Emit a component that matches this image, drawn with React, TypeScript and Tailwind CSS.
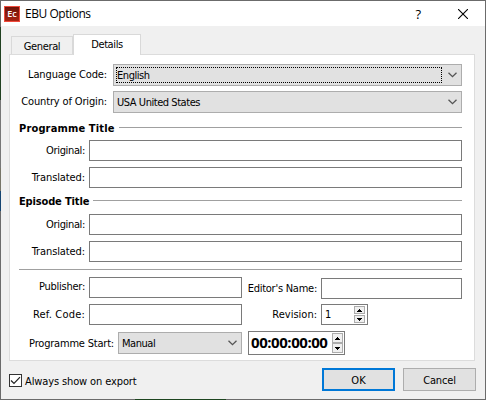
import type { ReactNode } from "react";

function Chevron() {
  return (
    <svg width="9" height="6" viewBox="0 0 9 6" fill="none" stroke="#555" strokeWidth="1.3" className="mr-[4px] shrink-0">
      <path d="M0.5 0.7 4.5 4.7 8.5 0.7" />
    </svg>
  );
}

function Label({ children, className }: { children: ReactNode; className: string }) {
  return <label className={`shrink-0 text-right whitespace-nowrap ${className}`}>{children}</label>;
}

function Combo({ value, className, focused = false }: { value: string; className: string; focused?: boolean }) {
  return (
    <div className={`flex h-[22px] shrink-0 items-center justify-between border border-[#adadad] bg-[#e1e1e1] ${className}`}>
      <span className={`ml-[2px] flex h-[16px] items-center whitespace-nowrap border border-dotted pt-[2px] tracking-[-0.45px] ${focused ? "w-[326px] border-black" : "border-transparent"}`}>
        {value}
      </span>
      <Chevron />
    </div>
  );
}

function Field({ className }: { className: string }) {
  return <div className={`h-[21px] shrink-0 border border-[#7a7a7a] bg-white ${className}`} />;
}

function Heading({ title, className }: { title: string; className: string }) {
  return (
    <div className="flex h-[14px] items-center">
      <span className={`shrink-0 whitespace-nowrap pt-[2px] font-bold ${className}`}>{title}</span>
      <span className="mb-px h-px flex-1 bg-[#a0a0a0]" />
    </div>
  );
}

function SpinButton({ down = false, className }: { down?: boolean; className: string }) {
  return (
    <span className={`flex w-[11px] items-center justify-center border border-[#acacac] bg-[#f0f0f0] ${className}`}>
      <svg width="5" height="3" viewBox="0 0 5 3" fill="#000" shapeRendering="crispEdges">
        <path d={down ? "M0 0h5v1h-1v1h-1v1h-1v-1h-1v-1h-1z" : "M2 0h1v1h1v1h1v1h-5v-1h1v-1h1z"} />
      </svg>
    </span>
  );
}

export default function App() {
  return (
    <div className="flex h-[400px] w-[486px] bg-[#6b6b6b] font-['DejaVu_Sans_Condensed','DejaVu_Sans',sans-serif] text-[11px] leading-[14px] text-black">
      <div className="flex w-px shrink-0 flex-col">
        <div className="h-[27px] bg-[#6b6b6b]" />
        <div className="h-[73px] bg-[#204020]" />
        <div className="h-[68px] bg-[#777]" />
        <div className="h-[23px] bg-[#777568]" />
        <div className="h-[20px] bg-[#164571]" />
        <div className="h-[189px] bg-[#6b6b6b]" />
      </div>
      <div className="mt-px flex h-[399px] w-[484px] flex-col bg-[#f0f0f0]">
        <header className="flex h-[25px] shrink-0 items-center bg-white pl-[3px]">
          <div className="flex h-[16px] w-[16px] items-center justify-center border border-[#f04a3c] bg-linear-to-b from-[#6e1409] to-[#a82413] font-['Open_Sans',sans-serif] text-[9px] leading-none font-semibold text-white">
            Ec
          </div>
          <span className="ml-[5px] font-['Open_Sans',sans-serif] text-[12px] tracking-[-0.45px]">EBU Options</span>
          <span className="ml-auto mr-[37px] font-['Open_Sans',sans-serif] text-[13px]">?</span>
          <svg width="10" height="10" viewBox="0 0 10 10" stroke="#000" strokeWidth="1.1" className="mr-[17px]">
            <path d="M0 0 10 10M10 0 0 10" />
          </svg>
        </header>

        <nav className="flex h-[28px] shrink-0 items-end pl-[10px]">
          <div className="flex h-[18px] w-[62px] items-center justify-center border border-b-0 border-[#d9d9d9] pt-[2px] tracking-[-0.35px]">General</div>
          <div className="relative z-10 -mb-px flex h-[21px] w-[68px] items-center justify-center border border-b-0 border-[#d9d9d9] bg-white tracking-[-0.4px]">Details</div>
        </nav>

        <main className="ml-[8px] h-[307px] w-[466px] shrink-0 border border-[#dcdcdc] bg-white pt-[9px] pl-[9px]">
          <div className="flex w-[443px] flex-col">
            <div className="flex items-center">
              <Label className="w-[88px] tracking-[-0.12px]">Language Code:</Label>
              <Combo value="English" focused className="ml-[6px] w-[349px]" />
            </div>
            <div className="mt-[5px] flex items-center">
              <Label className="w-[88px] tracking-[-0.15px]">Country of Origin:</Label>
              <Combo value="USA United States" className="ml-[6px] w-[349px]" />
            </div>
            <div className="mt-[8px]"><Heading title="Programme Title" className="w-[100px] tracking-[0.15px]" /></div>
            <div className="mt-[5px] flex items-center">
              <Label className="w-[66px] tracking-[-0.35px]">Original:</Label>
              <Field className="ml-[4px] w-[373px]" />
            </div>
            <div className="mt-[6px] flex items-center">
              <Label className="w-[66px] tracking-[-0.1px]">Translated:</Label>
              <Field className="ml-[4px] w-[373px]" />
            </div>
            <div className="mt-[6px]"><Heading title="Episode Title" className="w-[74px] tracking-[-0.15px]" /></div>
            <div className="mt-[6px] flex items-center">
              <Label className="w-[66px] tracking-[-0.35px]">Original:</Label>
              <Field className="ml-[4px] w-[373px]" />
            </div>
            <div className="mt-[6px] flex items-center">
              <Label className="w-[66px] tracking-[-0.1px]">Translated:</Label>
              <Field className="ml-[4px] w-[373px]" />
            </div>
            <div className="mt-[7px] h-px bg-[#a0a0a0]" />
            <div className="mt-[7px] flex">
              <Label className="w-[66px] pt-[3px] tracking-[-0.25px]">Publisher:</Label>
              <Field className="ml-[4px] w-[153px]" />
              <Label className="w-[75px] pt-[5px] tracking-[-0.25px]">Editor's Name:</Label>
              <Field className="mt-px ml-[4px] w-[141px]" />
            </div>
            <div className="mt-[5px] flex">
              <Label className="w-[66px] pt-[4px] tracking-[0.2px]">Ref. Code:</Label>
              <Field className="ml-[4px] w-[153px]" />
              <Label className="w-[75px] pt-[4px]">Revision:</Label>
              <div className="ml-[4px] flex h-[21px] w-[47px] items-center justify-between border border-[#7a7a7a] bg-white pr-[2px] pl-[3px]">
                <span>1</span>
                <div className="flex flex-col gap-px">
                  <SpinButton className="h-[8px]" />
                  <SpinButton down className="h-[8px]" />
                </div>
              </div>
            </div>
            <div className="mt-[6px] flex items-center">
              <Label className="w-[95px] pt-[2px] tracking-[-0.2px]">Programme Start:</Label>
              <Combo value="Manual" className="ml-[4px] w-[124px]" />
              <div className="ml-[6px] flex h-[24px] w-[97px] items-center justify-between border border-[#7a7a7a] bg-white pr-px pl-[2px]">
                <span className="pb-[3px] font-['Open_Sans',sans-serif] text-[15px] font-bold tracking-[-0.45px] whitespace-nowrap">00:00:00:00</span>
                <div className="flex flex-col">
                  <SpinButton className="h-[10px]" />
                  <SpinButton down className="h-[10px]" />
                </div>
              </div>
            </div>
          </div>
        </main>

        <footer className="flex flex-1 items-start pt-[7px] pl-[8px]">
          <div className="mt-[5px] flex h-[15px] items-center">
            <span className="flex h-[13px] w-[13px] items-center justify-center border border-[#333] bg-white">
              <svg width="11" height="11" viewBox="0 0 11 11" fill="none" stroke="#222" strokeWidth="1.2">
                <path d="M1 5.5 4 8.5 10 2.2" />
              </svg>
            </span>
            <span className="ml-[3px] pt-[2px] whitespace-nowrap tracking-[-0.12px]">Always show on export</span>
          </div>
          <button className="ml-auto h-[23px] w-[73px] border-2 border-[#0078d7] bg-[#e1e1e1] pt-[2px]">OK</button>
          <button className="mr-[9px] ml-[8px] h-[23px] w-[73px] border border-[#adadad] bg-[#e1e1e1] pt-[2px] tracking-[-0.15px]">Cancel</button>
        </footer>
        <div className="flex h-px shrink-0 bg-[#6b6b6b]">
          <div className="ml-[134px] w-[91px] bg-[#1d451f]" />
        </div>
      </div>
    </div>
  );
}
